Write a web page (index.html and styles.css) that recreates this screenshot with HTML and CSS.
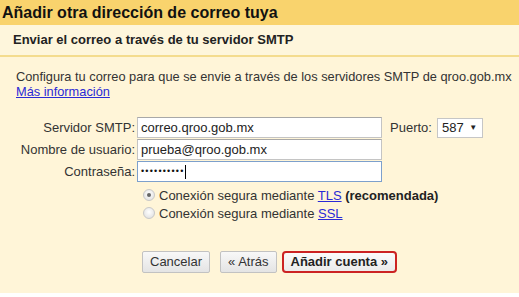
FILE: index.html
```html
<!DOCTYPE html>
<html lang="es">
<head>
<meta charset="utf-8">
<title>Añadir otra dirección de correo tuya</title>
<link rel="stylesheet" href="styles.css">
</head>
<body>
<div class="page">
  <div class="title">Añadir otra dirección de correo tuya</div>
  <div class="subtitle">Enviar el correo a través de tu servidor SMTP</div>
  <div class="content">
    <p class="intro">Configura tu correo para que se envie a través de los servidores SMTP de qroo.gob.mx<br><a href="#" class="link">Más información</a></p>
    <div class="form">
      <label class="label">Servidor SMTP:</label>
      <div class="field"><span class="input">correo.qroo.gob.mx</span></div>
      <div class="port"><span class="port-label">Puerto:</span><span class="select">587 <span class="arrow">▼</span></span></div>
      <label class="label">Nombre de usuario:</label>
      <div class="field"><span class="input">prueba@qroo.gob.mx</span></div>
      <div></div>
      <label class="label">Contraseña:</label>
      <div class="field"><span class="input focus"><span class="dots">••••••••••</span><span class="caret"></span></span></div>
      <div></div>
    </div>
    <div class="radios">
      <div class="radio-row"><span class="radio checked"></span><span>Conexión segura mediante <a href="#" class="link">TLS</a> <b>(recomendada)</b></span></div>
      <div class="radio-row"><span class="radio"></span><span>Conexión segura mediante <a href="#" class="link">SSL</a></span></div>
    </div>
    <div class="buttons">
      <span class="btn">Cancelar</span>
      <span class="btn">« Atrás</span>
      <span class="btn primary">Añadir cuenta »</span>
    </div>
  </div>
</div>
</body>
</html>
```
FILE: styles.css
```css
html, body {
  margin: 0;
  padding: 0;
  background: #ffffff;
}
body {
  font-family: "Liberation Sans", Arial, sans-serif;
  font-size: 13px;
  color: #222222;
}
.page {
  width: 519px;
}
.title {
  height: 25px;
  background: #f9d36d;
  font-weight: bold;
  font-size: 16px;
  color: #111111;
  padding-left: 2px;
  line-height: 25px;
}
.subtitle {
  height: 30px;
  background: #fef6dc;
  border-bottom: 2px solid #f4dc8e;
  font-weight: bold;
  font-size: 13px;
  line-height: 30px;
  padding-left: 13px;
  color: #222222;
}
.content {
  background: #fff5d8;
  height: 236px;
  padding-top: 12px;
  box-sizing: border-box;
}
.intro {
  margin: 0;
  padding-left: 16px;
  line-height: 15px;
  color: #333333;
  font-size: 12.8px;
  white-space: nowrap;
}
.link {
  color: #2a2ad6;
  text-decoration: underline;
}
.form {
  display: grid;
  grid-template-columns: 137px 245px auto;
  row-gap: 1px;
  margin-top: 18px;
  align-items: center;
}
.label {
  text-align: right;
  padding-right: 2px;
  color: #333333;
}
.field {
  height: 21px;
}
.input {
  display: block;
  box-sizing: border-box;
  height: 21px;
  width: 245px;
  background: #ffffff;
  border: 1px solid #c4c4c4;
  border-top-color: #a8a8a8;
  padding: 0 3px;
  line-height: 19px;
  font-size: 13px;
  color: #222222;
}
.input.focus {
  border-color: #7da0cc;
  display: flex;
  align-items: center;
}
.dots {
  font-size: 9px;
  letter-spacing: 1.2px;
  line-height: 19px;
  color: #111111;
}
.caret {
  display: inline-block;
  width: 1px;
  height: 14px;
  background: #000000;
  margin-left: 0;
}
.port {
  display: flex;
  align-items: center;
  padding-left: 8px;
  gap: 5px;
}
.port-label {
  color: #333333;
}
.select {
  box-sizing: border-box;
  height: 20px;
  width: 46px;
  border: 1px solid #c6c6c6;
  background: #ffffff;
  padding-left: 4px;
  line-height: 18px;
  color: #222222;
}
.arrow {
  font-size: 8px;
  vertical-align: 2px;
  margin-left: 2px;
}
.radios {
  margin-top: 4px;
  padding-left: 143px;
  display: flex;
  flex-direction: column;
}
.radio-row {
  display: flex;
  align-items: center;
  height: 18px;
  gap: 4px;
  color: #333333;
}
.radio-row b {
  color: #222222;
}
.radio {
  box-sizing: border-box;
  width: 12px;
  height: 12px;
  border-radius: 50%;
  border: 1px solid #c8c8c8;
  background: radial-gradient(circle at 50% 40%, #ffffff, #dcdcdc);
  display: flex;
  align-items: center;
  justify-content: center;
}
.radio.checked::after {
  content: "";
  width: 4px;
  height: 4px;
  border-radius: 50%;
  background: #666666;
}
.buttons {
  display: flex;
  gap: 10px;
  padding-left: 142px;
  margin-top: 29px;
  align-items: center;
}
.btn {
  box-sizing: border-box;
  height: 22px;
  line-height: 20px;
  padding: 0 7px;
  border: 1px solid #c2c2c2;
  border-radius: 2px;
  background: linear-gradient(#f8f8f8, #e4e4e4);
  color: #333333;
  font-size: 13px;
}
.btn.primary {
  margin-left: -5px;
  border: 2px solid #cc2323;
  border-radius: 4px;
  font-weight: bold;
  color: #222222;
  line-height: 18px;
  height: 22px;
  background: linear-gradient(#fbfbfb, #ebebeb);
}
```
